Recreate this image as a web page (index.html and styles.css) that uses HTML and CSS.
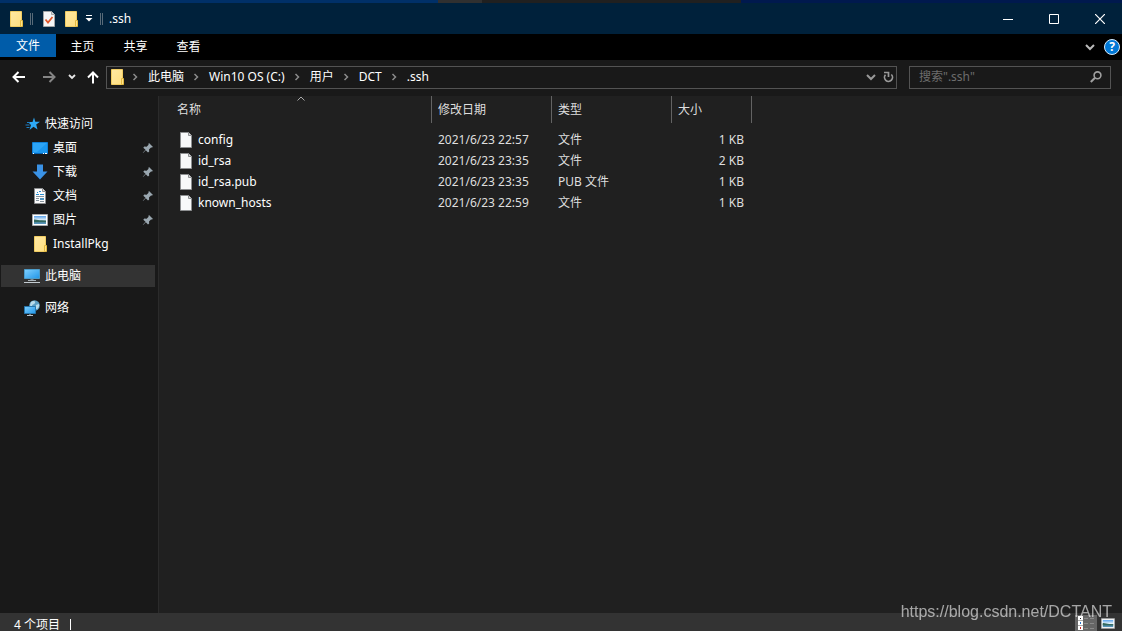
FILE: index.html
```html
<!DOCTYPE html>
<html lang="zh-CN">
<head>
<meta charset="utf-8">
<meta name="viewport" content="width=device-width, initial-scale=1">
<title>.ssh</title>
<link rel="stylesheet" href="styles.css">
</head>
<body>
<svg class="defs" aria-hidden="true">
  <defs>
    <linearGradient id="g-folder" x1="0" y1="0" x2="1" y2="1"><stop offset="0" stop-color="#ffe9a3"/><stop offset="1" stop-color="#ffdf80"/></linearGradient>
    <linearGradient id="g-screen" x1="0" y1="0" x2="1" y2="1"><stop offset="0" stop-color="#7fd0ff"/><stop offset="1" stop-color="#2196e8"/></linearGradient>
    <linearGradient id="g-sky" x1="0" y1="0" x2="0" y2="1"><stop offset="0" stop-color="#5aa2ec"/><stop offset=".5" stop-color="#e4f2fa"/><stop offset=".6" stop-color="#3f7472"/><stop offset="1" stop-color="#5b9ac8"/></linearGradient>
    <symbol id="folder" viewBox="0 0 16 16">
      <path d="M2.500.5h11v15h-11z" fill="url(#g-folder)" stroke="#f0cc62"/>
      <path d="M12.500 9.500h2v6h-2z" fill="#ffe28a" stroke="#e3b93f"/>
    </symbol>
    <symbol id="file" viewBox="0 0 12 16">
      <path d="M.5.5h8l3 3v12H.5z" fill="#f8f9fa" stroke="#8d8f91"/>
      <path d="M8.500.5v3h3" fill="#d8dadb" stroke="#8d8f91"/>
    </symbol>
    <symbol id="props" viewBox="0 0 12 16">
      <path d="M.5.5h8l3 3v12H.5z" fill="#f4f5f6" stroke="#a2a4a6"/>
      <path d="M8.500.5v3h3" fill="#d8dadb" stroke="#a2a4a6"/>
      <path d="M2.500 8.500l2.500 3L9.500 6" fill="none" stroke="#e0562b" stroke-width="1.800"/>
    </symbol>
    <symbol id="pin" viewBox="0 0 12 12">
      <path d="M7 1l4 4-1.200.6-.8-.2-2 2 .2 2.200-1.200.9-2.200-2.300L1 11l-.2-.3L3.500 7.700 1.300 5.700l1-1.200 2.300.2 2-2-.2-.7z" fill="#9aa7b0"/>
    </symbol>
    <symbol id="picture" viewBox="0 0 16 12">
      <path d="M.5.5h15v11H.5z" fill="#fff" stroke="#a7a9ab"/>
      <path d="M2 2h12v8H2z" fill="url(#g-sky)"/>
      <path d="M2 5.500c3-.3 5 1.200 8 1l4 .5v1H2z" fill="#33695f"/>
    </symbol>
    <symbol id="chevron-down" viewBox="0 0 10 8">
      <path d="M1 2l4 4 4-4" fill="none" stroke="currentColor" stroke-width="2"/>
    </symbol>
    <symbol id="chevron-right" viewBox="0 0 6 8">
      <path d="M1.500 1l3 3-3 3" fill="none" stroke="currentColor" stroke-width="1.500"/>
    </symbol>
  </defs>
</svg>

<div class="desktop-edge"></div>
<div class="window">
  <header class="titlebar">
    <svg class="icon16"><use href="#folder"/></svg>
    <span class="divider"></span>
    <button class="plain qat" aria-label="属性"><svg class="sheet"><use href="#props"/></svg></button>
    <button class="plain" aria-label="新建文件夹"><svg class="icon16"><use href="#folder"/></svg></button>
    <button class="plain qat-menu" aria-label="自定义快速访问工具栏"><svg width="8" height="7" viewBox="0 0 8 7"><path d="M1 .5h6" stroke="#fff"/><path d="M.5 3h7L4 6.500z" fill="#fff"/></svg></button>
    <span class="divider"></span>
    <h1 class="title">.ssh</h1>
    <div class="caption">
      <button class="plain" aria-label="最小化"><svg width="10" height="10" viewBox="0 0 10 10"><path d="M0 5.500h10" stroke="#fff"/></svg></button>
      <button class="plain" aria-label="最大化"><svg width="10" height="10" viewBox="0 0 10 10"><path d="M.5.5h9v9h-9z" fill="none" stroke="#fff"/></svg></button>
      <button class="plain" aria-label="关闭"><svg width="10" height="10" viewBox="0 0 10 10"><path d="M0 0l10 10M10 0L0 10" stroke="#fff" stroke-width="1.200"/></svg></button>
    </div>
  </header>

  <nav class="ribbon">
    <button class="plain tab tab-file">文件</button>
    <button class="plain tab">主页</button>
    <button class="plain tab">共享</button>
    <button class="plain tab">查看</button>
    <div class="ribbon-end">
      <button class="plain" aria-label="展开功能区"><svg class="chev"><use href="#chevron-down"/></svg></button>
      <button class="plain help" aria-label="帮助">?</button>
    </div>
  </nav>

  <div class="navbar">
    <div class="arrows">
      <button class="plain" aria-label="后退"><svg width="14" height="12" viewBox="0 0 14 12"><path d="M13 6H2M6.500 1L1.500 6l5 5" fill="none" stroke="#fff" stroke-width="2"/></svg></button>
      <button class="plain" aria-label="前进"><svg width="14" height="12" viewBox="0 0 14 12"><path d="M1 6h11M7.500 1l5 5-5 5" fill="none" stroke="#858585" stroke-width="2"/></svg></button>
      <button class="plain recent" aria-label="最近浏览的位置"><svg width="8" height="6" viewBox="0 0 8 6"><path d="M1 1l3 3 3-3" fill="none" stroke="#e8e8e8" stroke-width="1.800"/></svg></button>
      <button class="plain" aria-label="向上"><svg width="12" height="13" viewBox="0 0 12 13"><path d="M6 12.500V2M1 6.500l5-5 5 5" fill="none" stroke="#fff" stroke-width="2"/></svg></button>
    </div>
    <div class="address">
      <svg class="icon16"><use href="#folder"/></svg>
      <svg class="sep"><use href="#chevron-right"/></svg>
      <a class="crumb" href="#">此电脑</a>
      <svg class="sep"><use href="#chevron-right"/></svg>
      <a class="crumb" href="#">Win10 OS (C:)</a>
      <svg class="sep"><use href="#chevron-right"/></svg>
      <a class="crumb" href="#">用户</a>
      <svg class="sep"><use href="#chevron-right"/></svg>
      <a class="crumb" href="#">DCT</a>
      <svg class="sep"><use href="#chevron-right"/></svg>
      <a class="crumb" href="#">.ssh</a>
      <div class="address-end">
        <button class="plain" aria-label="以前的位置"><svg class="chev"><use href="#chevron-down"/></svg></button>
        <button class="plain" aria-label="刷新"><svg width="11" height="12" viewBox="0 0 11 12"><path d="M8.300 3.500A4 4 0 1 1 2.500 3.700M1 1.500h4.500V6" fill="none" stroke="#999" stroke-width="1.700"/></svg></button>
      </div>
    </div>
    <form class="search">
      <input class="search-input" type="search" aria-label="搜索" placeholder='搜索".ssh"'>
      <button class="plain" type="button" aria-label="开始搜索"><svg width="12" height="12" viewBox="0 0 12 12"><circle cx="7.500" cy="4.300" r="3.400" fill="none" stroke="#a0a0a0" stroke-width="1.600"/><path d="M5 6.800L.8 11" stroke="#a0a0a0" stroke-width="2"/></svg></button>
    </form>
  </div>

  <div class="body">
    <aside class="sidebar">
      <a class="item head" href="#"><svg class="icon16" viewBox="0 0 16 16"><path d="M9 1.500l1.300 4.200H15l-3.800 2.800L12.500 13.500 8.500 10.700 4.500 14 6 9 3 6h4.500z" fill="#2da8f5"/><path d="M2 6.500h3M.5 9h4M1.500 11.500h3" stroke="#1c7fc4"/></svg><span>快速访问</span></a>
      <a class="item" href="#"><svg class="icon16" viewBox="0 0 16 16"><path d="M.5 2.500h15v11H.5z" fill="#1a97f0" stroke="#0f7fd6"/><path d="M1 3h14L5 12H1z" fill="#35aaf8" opacity=".7"/><path d="M0 13.500h16" stroke="#0a66b5"/><path d="M1 13.500h1M11 13.500h1M13 13.500h2" stroke="#fff"/></svg><span>桌面</span><svg class="pin"><use href="#pin"/></svg></a>
      <a class="item" href="#"><svg class="icon16" viewBox="0 0 16 16"><path d="M5 .5h6v7h4.500L8 15.500.5 7.500H5z" fill="#3a92e6"/></svg><span>下载</span><svg class="pin"><use href="#pin"/></svg></a>
      <a class="item" href="#"><svg class="icon16" viewBox="0 0 16 16"><path d="M2.500.5h8l3 3v12h-11z" fill="#fbfbfb" stroke="#8d8f91"/><path d="M10.500.5v3h3" fill="#ddd" stroke="#8d8f91"/><path d="M5 4.500h1M7 3.500h2M4 6.500h3M8 6.500h4" stroke="#258bd0"/><path d="M4 8.500h8M4 10.500h3M4 12.500h3M8 13.500h4" stroke="#85929b"/><path d="M8 10h4v2H8z" fill="#4d93c0"/></svg><span>文档</span><svg class="pin"><use href="#pin"/></svg></a>
      <a class="item" href="#"><svg class="icon-pic"><use href="#picture"/></svg><span>图片</span><svg class="pin"><use href="#pin"/></svg></a>
      <a class="item" href="#"><svg class="icon16"><use href="#folder"/></svg><span>InstallPkg</span></a>
      <a class="item root selected" href="#"><svg class="icon16" viewBox="0 0 16 16"><path d="M.5 1.500h15v9H.5z" fill="url(#g-screen)" stroke="#4c9cca"/><path d="M6.500 11h3v1.500h-3z" fill="#7c8a94"/><path d="M4 12.500h8" stroke="#aab4bb"/><path d="M0 14.500h16" stroke="#c3cbd0"/></svg><span>此电脑</span></a>
      <a class="item root" href="#"><svg class="icon16" viewBox="0 0 16 16"><circle cx="10.500" cy="5.500" r="5.300" fill="#5b9fc4"/><path d="M7 2c2-2 5-1 4 1s-3 1-3 3-2 0-2-1zM12 5l3-1c.5 3-1 5-3 5z" fill="#b9dceb"/><path d="M.5 6.500h11v7H.5z" fill="url(#g-screen)" stroke="#2676ad"/><path d="M6 14v1.500M3 15.500h6" stroke="#b6c2ca"/></svg><span>网络</span></a>
    </aside>

    <main class="files">
      <table class="list">
        <colgroup><col class="c-name"><col class="c-date"><col class="c-type"><col class="c-size"></colgroup>
        <thead>
          <tr>
            <th scope="col"><div class="th first">名称<svg class="sort" viewBox="0 0 8 5"><path d="M.5 4.500L4 1l3.500 3.500" fill="none" stroke="#aaa"/></svg></div></th>
            <th scope="col"><div class="th">修改日期</div></th>
            <th scope="col"><div class="th">类型</div></th>
            <th scope="col"><div class="th">大小</div></th>
          </tr>
        </thead>
        <tbody>
          <tr><td><div class="name"><svg class="sheet"><use href="#file"/></svg>config</div></td><td>2021/6/23 22:57</td><td>文件</td><td class="num">1 KB</td></tr>
          <tr><td><div class="name"><svg class="sheet"><use href="#file"/></svg>id_rsa</div></td><td>2021/6/23 23:35</td><td>文件</td><td class="num">2 KB</td></tr>
          <tr><td><div class="name"><svg class="sheet"><use href="#file"/></svg>id_rsa.pub</div></td><td>2021/6/23 23:35</td><td>PUB 文件</td><td class="num">1 KB</td></tr>
          <tr><td><div class="name"><svg class="sheet"><use href="#file"/></svg>known_hosts</div></td><td>2021/6/23 22:59</td><td>文件</td><td class="num">1 KB</td></tr>
        </tbody>
      </table>
    </main>
  </div>

  <footer class="status">
    <span class="count">4 个项目</span>
    <div class="views">
      <button class="plain view active" aria-label="详细信息"><svg width="16" height="14" viewBox="0 0 16 14"><path d="M0 0h5v14H0z" fill="#fff"/><path d="M0 4.500h5M0 9.500h5" stroke="#aaa"/><path d="M2 2h1v1H2z" fill="#222"/><path d="M2 6h1v2H2z" fill="#2773c8"/><path d="M2 11h1v2H2z" fill="#c22"/><path d="M6 2.500h4M12 2.500h4M6 7.500h4M12 7.500h4M6 12.500h4M12 12.500h4" stroke="#8a8a8a"/></svg></button>
      <button class="plain view" aria-label="大图标"><svg width="14" height="11"><use href="#picture"/></svg></button>
    </div>
  </footer>
</div>
<div class="watermark">https://blog.csdn.net/DCTANT</div>
</body>
</html>
```

FILE: styles.css
```css
* { box-sizing: border-box; }

body {
  margin: 0;
  min-height: 100vh;
  display: flex;
  flex-direction: column;
  background: #191919;
  color: #fff;
  font: 12px/18px "Noto Sans", "Noto Sans CJK SC", sans-serif;
}

svg { display: block; flex: none; }
.defs { position: absolute; width: 0; height: 0; }

.plain {
  display: flex;
  align-items: center;
  justify-content: center;
  margin: 0;
  padding: 0;
  border: 0;
  background: none;
  color: inherit;
  font: inherit;
}

a { color: inherit; text-decoration: none; }
.icon16 { width: 16px; height: 16px; }
.icon-pic { width: 16px; height: 12px; }
.sheet { width: 12px; height: 16px; }
.chev { width: 10px; height: 8px; }

.desktop-edge {
  height: 3px;
  background: linear-gradient(90deg, #003068 0 39%, #303030 39% 43%, #202020 43% 66%, #00194e 66%);
}

.window { flex: 1; display: flex; flex-direction: column; }

/* Title bar */
.titlebar {
  display: flex;
  align-items: center;
  height: 31px;
  padding-left: 8px;
  background: #00213b;
}
.divider {
  width: 3px;
  height: 12px;
  margin: 0 6px;
  border: solid #586a78;
  border-width: 0 1px;
}
.qat { margin: 0 8px 0 4px; }
.qat-menu { width: 14px; margin-left: 3px; }
.qat-menu + .divider { margin: 0 6px 0 4px; }
.title { margin: 0; font-size: 12px; font-weight: 400; }
.caption { display: flex; margin-left: auto; align-self: stretch; }
.caption .plain { width: 46px; }
.caption .plain:last-child { width: 45px; }

/* Ribbon tabs */
.ribbon { display: flex; height: 26px; background: #000; }
.tab { width: 53px; height: 26px; }
.tab-file { width: 56px; height: 23px; background: #005ca9; }
.ribbon-end {
  display: flex;
  align-items: center;
  gap: 9px;
  margin-left: auto;
  padding-right: 2px;
  color: #bbb;
}
.help {
  width: 16px;
  height: 16px;
  border: 1px solid #d6ecff;
  border-radius: 50%;
  background: #0078d7;
  color: #fff;
  font-weight: 700;
  line-height: 14px;
}

/* Address row */
.navbar {
  display: flex;
  align-items: center;
  height: 36px;
  padding: 0 11px 2px 12px;
  background: #191919;
}
.arrows { display: flex; align-items: center; gap: 16px; width: 94px; }
.arrows .recent { width: 8px; margin: 0 -5px 0 -4px; }
.address {
  flex: 1;
  display: flex;
  align-items: center;
  height: 23px;
  padding-left: 2px;
  border: 1px solid #535353;
}
.sep { width: 6px; height: 8px; margin: 0 10px 0 9px; color: #8a8a8a; }
.icon16 + .sep { margin-left: 7px; }
.address-end { display: flex; gap: 7px; margin-left: auto; padding-right: 2px; color: #999; }
.search {
  display: flex;
  align-items: center;
  width: 202px;
  height: 23px;
  margin-left: 12px;
  padding: 0 8px 0 9px;
  border: 1px solid #535353;
}
.search-input {
  flex: 1;
  min-width: 0;
  padding: 0;
  border: 0;
  outline: 0;
  background: none;
  color: #fff;
  font: inherit;
}
.search-input::placeholder { color: #6d6d6d; opacity: 1; }

/* Content */
.body { flex: 1; display: flex; }
.sidebar {
  width: 159px;
  padding: 16px 3px 0 1px;
  border-right: 1px solid #2b2b2b;
  background: #191919;
}
.item {
  display: flex;
  align-items: center;
  gap: 5px;
  height: 24px;
  padding: 0 1px 0 31px;
}
.item.head { gap: 4px; padding-left: 24px; }
.item.root { height: 22px; margin-top: 10px; padding-left: 23px; }
.item.root.selected { margin-top: 9px; background: #333; }
.pin { width: 12px; height: 12px; margin-left: auto; }

.files { flex: 1; min-width: 0; background: #202020; }
.list { width: 593px; border-collapse: collapse; table-layout: fixed; }
.c-name { width: 273px; }
.c-date, .c-type { width: 120px; }
.c-size { width: 80px; }
.list th { padding: 0 0 6px; font-weight: 400; text-align: left; color: #dedede; }
.th {
  position: relative;
  height: 27px;
  padding-left: 6px;
  border-right: 1px solid #636363;
  line-height: 28px;
}
.th.first { padding-left: 18px; }
.sort { position: absolute; top: 0; left: 50%; width: 8px; height: 5px; margin-left: 2px; }
.list td { height: 21px; padding: 0 0 0 6px; color: #dedede; }
.list .num { padding-right: 8px; text-align: right; }
.name { display: flex; align-items: center; gap: 6px; padding-left: 15px; color: #fff; }

/* Status bar */
.status {
  display: flex;
  height: 18px;
  padding: 2px 6px 0 14px;
  overflow: hidden;
  background: #333;
}
.count { display: flex; gap: 10px; line-height: 20px; }
.count::after { content: ""; width: 1px; height: 11px; margin-top: 4px; background: #fff; }
.views { display: flex; gap: 3px; margin-left: auto; }
.view { width: 16px; height: 16px; }
.view.active { width: 22px; background: #666; }

.watermark {
  position: fixed;
  right: 10px;
  bottom: 9px;
  color: rgba(255, 255, 255, .6);
  font: 16px/20px "Liberation Sans", Arial, sans-serif;
}
```
